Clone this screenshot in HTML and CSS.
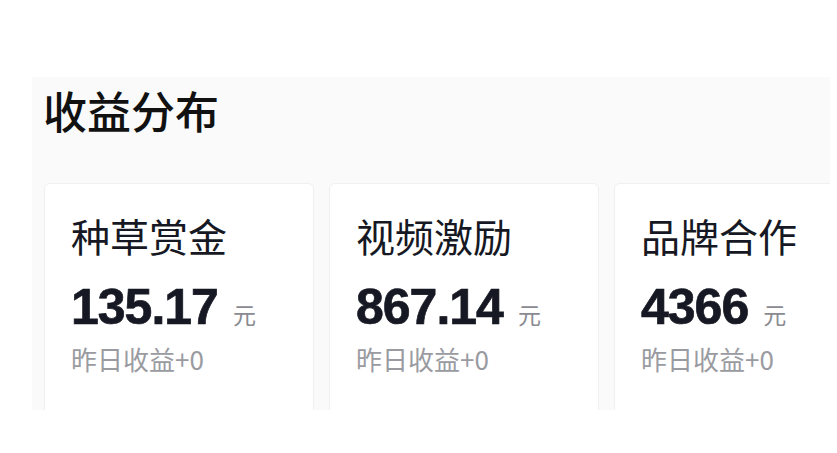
FILE: index.html
```html
<!DOCTYPE html>
<html lang="zh">
<head>
<meta charset="utf-8">
<link rel="stylesheet" href="styles.css">
</head>
<body>
<section class="panel">
  <h1 class="title">收益分布</h1>
  <div class="cards">
    <div class="card">
      <div class="label">种草赏金</div>
      <div class="amount"><span class="num">135.17</span><span class="unit">元</span></div>
      <div class="sub">昨日收益+0</div>
    </div>
    <div class="card">
      <div class="label">视频激励</div>
      <div class="amount"><span class="num">867.14</span><span class="unit">元</span></div>
      <div class="sub">昨日收益+0</div>
    </div>
    <div class="card">
      <div class="label">品牌合作</div>
      <div class="amount"><span class="num">4366</span><span class="unit">元</span></div>
      <div class="sub">昨日收益+0</div>
    </div>
  </div>
</section>
</body>
</html>
```

FILE: styles.css
```css
html, body {
  margin: 0;
  padding: 0;
  background: #ffffff;
}
body {
  padding: 77px 7px 0 32px;
  font-family: "Noto Sans CJK SC", "Noto Sans", sans-serif;
  color: #161823;
}
.panel {
  width: 798px;
  height: 333px;
  background: #fafafa;
  overflow: hidden;
  box-sizing: border-box;
  padding: 11px 0 0 11px;
}
.title {
  margin: 0;
  font-size: 44px;
  line-height: 44px;
  font-weight: 500;
  color: #111111;
}
.cards {
  display: flex;
  gap: 15px;
  margin-top: 51px;
  margin-left: 1px;
}
.card {
  flex: 0 0 270px;
  height: 260px;
  box-sizing: border-box;
  background: #ffffff;
  border: 1px solid #f0f0f0;
  border-radius: 6px;
  padding: 32px 0 0 26px;
}
.label {
  font-size: 39px;
  line-height: 39px;
  font-weight: 400;
}
.amount {
  margin-top: 27px;
  display: flex;
  align-items: baseline;
  line-height: 50px;
}
.num {
  font-family: "Liberation Sans", Arial, sans-serif;
  font-weight: 700;
  font-size: 50px;
  letter-spacing: -1px;
  color: #161823;
  -webkit-text-stroke: 0.7px #161823;
}
.unit {
  font-size: 23px;
  color: #8a8b91;
  margin-left: 15px;
}
.sub {
  margin-top: 7px;
  font-size: 26px;
  line-height: 26px;
  color: #9a9ba1;
}
```
